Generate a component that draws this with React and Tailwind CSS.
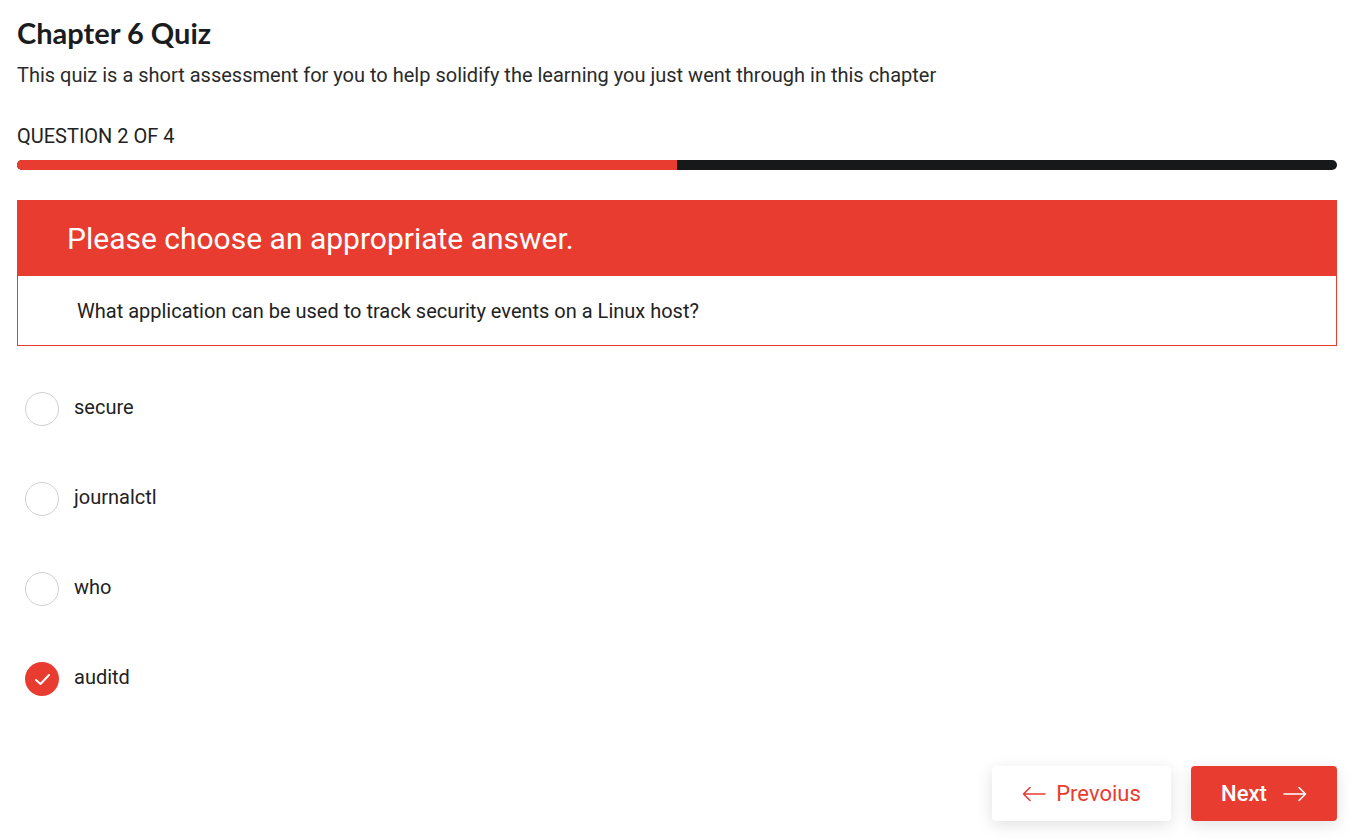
import React, { useState } from 'react';

const options = ['secure', 'journalctl', 'who', 'auditd'];

function ArrowLeft() {
  return (
    <svg width="24" height="16" viewBox="0 0 24 16" fill="none" stroke="currentColor" strokeWidth="1.6" strokeLinecap="round" strokeLinejoin="round">
      <path d="M23 8H1.5M8 1.5L1.5 8L8 14.5" />
    </svg>
  );
}

function ArrowRight() {
  return (
    <svg width="24" height="16" viewBox="0 0 24 16" fill="none" stroke="currentColor" strokeWidth="1.6" strokeLinecap="round" strokeLinejoin="round">
      <path d="M1 8h21.5M16 1.5L22.5 8L16 14.5" />
    </svg>
  );
}

export default function App() {
  const [selected, setSelected] = useState(3);

  return (
    <div className="min-h-[840px] bg-white pl-[17px] pr-[29px] pt-[15px] text-[#212121]" style={{ fontFamily: 'Roboto, "Liberation Sans", sans-serif' }}>
      <h1 className="text-[29px] font-bold leading-[36px] text-[#1b1c1e]" style={{ fontFamily: 'Lato, "Noto Sans", sans-serif' }}>
        Chapter 6 Quiz
      </h1>
      <p className="mt-[12px] text-[20px] leading-[24px] text-[#2a2a2a]">
        This quiz is a short assessment for you to help solidify the learning you just went through in this chapter
      </p>

      <div className="mt-[37px] text-[20px] leading-[24px] uppercase text-[#222]">Question 2 of 4</div>

      {/* progress */}
      <div className="mt-[12px] flex h-[10px] w-full overflow-hidden rounded-full bg-[#17181a]">
        <div className="h-full w-1/2 bg-[#e83c30]" />
      </div>

      {/* question card */}
      <div className="mt-[30px]">
        <div className="flex h-[76px] items-center bg-[#e83c30] pl-[50px] text-[30px] text-white">
          Please choose an appropriate answer.
        </div>
        <div className="flex h-[70px] items-center border border-t-0 border-[#e83c30] pl-[59px] text-[20px] text-[#222]">
          What application can be used to track security events on a Linux host?
        </div>
      </div>

      {/* options */}
      <div className="mt-[46px] flex flex-col gap-[56px] pl-[8px]">
        {options.map((opt, i) => (
          <label key={opt} className="flex h-[34px] cursor-pointer items-center gap-[15px]" onClick={() => setSelected(i)}>
            {selected === i ? (
              <span className="flex h-[34px] w-[34px] items-center justify-center rounded-full bg-[#e83c30]">
                <svg width="17" height="13" viewBox="0 0 17 13" fill="none" stroke="white" strokeWidth="2" strokeLinecap="round" strokeLinejoin="round">
                  <path d="M2 7L6.5 11L15 2" />
                </svg>
              </span>
            ) : (
              <span className="h-[34px] w-[34px] rounded-full border border-[#d0d0d0] bg-white" />
            )}
            <span className="-mt-[4px] text-[20px] text-[#222]">{opt}</span>
          </label>
        ))}
      </div>

      {/* nav */}
      <div className="mt-[70px] flex justify-end gap-[20px]">
        <button className="flex h-[55px] w-[179px] items-center justify-center gap-[10px] rounded-[4px] bg-white text-[22px] text-[#e83c30] shadow-[0_4px_16px_rgba(0,0,0,0.12)]">
          <ArrowLeft />
          Prevoius
        </button>
        <button className="flex h-[55px] w-[146px] items-center justify-center gap-[16px] rounded-[4px] bg-[#e83c30] text-[22px] font-medium text-white shadow-[0_4px_16px_rgba(0,0,0,0.12)]">
          Next
          <ArrowRight />
        </button>
      </div>
    </div>
  );
}
